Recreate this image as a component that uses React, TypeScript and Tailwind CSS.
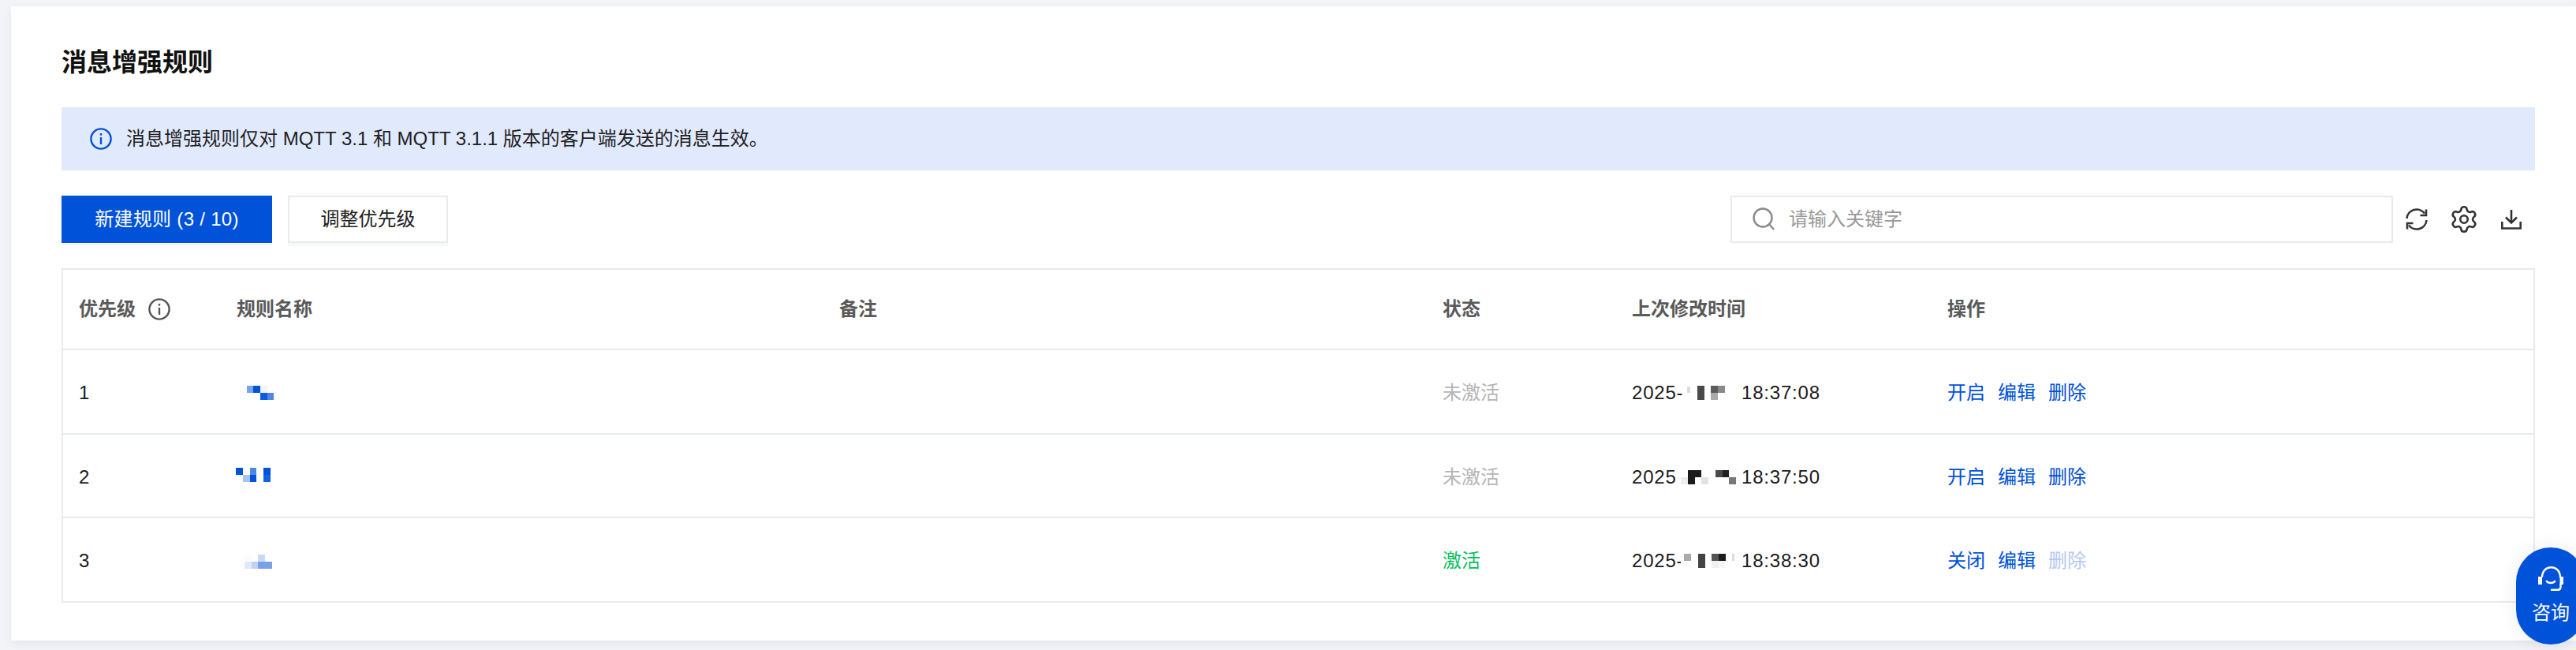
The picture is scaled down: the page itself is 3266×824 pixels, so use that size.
import { Settings } from 'lucide-react';

type Cell = [number, number, number, number, string];

const rows = [
  {
    no: '1',
    nameShift: 'mt-[3px]',
    name: [
      [14, 0, 8, 9, '#7aa3ea'],
      [22, 0, 9, 9, '#0052d9'],
      [31, 0, 9, 9, '#f0f4fe'],
      [31, 9, 9, 9, '#0f5ade'],
      [40, 9, 8, 9, '#4f87e6'],
    ] as Cell[],
    status: '未激活',
    statusClass: 'text-[#b5b5b5]',
    prefix: '2025-',
    date: [
      [8, 1, 4, 8, '#dddddd'],
      [21, 0, 9, 18, '#4a4a4a'],
      [38, 0, 9, 9, '#5c5c5c'],
      [47, 0, 9, 9, '#8a8a8a'],
      [38, 9, 9, 9, '#aaaaaa'],
    ] as Cell[],
    time: '18:37:08',
    toggle: '开启',
    deleteClass: 'text-[#0052d9]',
  },
  {
    no: '2',
    nameShift: 'mt-[-2px]',
    name: [
      [0, 0, 9, 9, '#0052d9'],
      [18, 0, 8, 9, '#4f87e6'],
      [35, 0, 9, 9, '#0052d9'],
      [9, 9, 9, 9, '#a9c3f1'],
      [18, 9, 8, 9, '#0052d9'],
      [35, 9, 9, 9, '#1560de'],
    ] as Cell[],
    status: '未激活',
    statusClass: 'text-[#b5b5b5]',
    prefix: '2025',
    date: [
      [0, 9, 9, 9, '#eeeeee'],
      [9, 0, 9, 18, '#1c1c1c'],
      [18, 0, 8, 9, '#1c1c1c'],
      [26, 9, 9, 9, '#e3e3e3'],
      [44, 0, 9, 9, '#4a4a4a'],
      [53, 0, 8, 9, '#222222'],
      [61, 9, 9, 9, '#777777'],
    ] as Cell[],
    time: '18:37:50',
    toggle: '开启',
    deleteClass: 'text-[#0052d9]',
  },
  {
    no: '3',
    nameShift: 'mt-[5px]',
    name: [
      [11, 0, 9, 9, '#fafbfe'],
      [28, 0, 9, 9, '#c9daf6'],
      [11, 9, 9, 9, '#e0e9fb'],
      [20, 9, 8, 9, '#bfd2f4'],
      [28, 9, 18, 9, '#78a1ea'],
    ] as Cell[],
    status: '激活',
    statusClass: 'text-[#0abf5b]',
    prefix: '2025-',
    date: [
      [0, 0, 4, 18, '#ffffff'],
      [4, 0, 9, 9, '#aaaaaa'],
      [22, 0, 9, 18, '#444444'],
      [39, 0, 9, 9, '#555555'],
      [48, 0, 9, 9, '#1c1c1c'],
      [39, 9, 9, 9, '#f0f0f0'],
      [48, 9, 9, 9, '#f7f7f7'],
      [65, 0, 3, 9, '#dddddd'],
    ] as Cell[],
    time: '18:38:30',
    toggle: '关闭',
    deleteClass: 'text-[#b5c9f3]',
  },
];

function Mosaic({ cells, width, className }: { cells: Cell[]; width: number; className?: string }) {
  return (
    <svg width={width} height={18} viewBox={`0 0 ${width} 18`} shapeRendering="crispEdges" className={className}>
      {cells.map(([x, y, w, h, fill], i) => (
        <rect key={i} x={x} y={y} width={w} height={h} fill={fill} />
      ))}
    </svg>
  );
}

function InfoIcon({ className }: { className: string }) {
  return (
    <svg viewBox="0 0 28 28" fill="none" stroke="currentColor" strokeWidth="2.4" className={className}>
      <circle cx="14" cy="14" r="12.6" />
      <path d="M14 12v9" />
      <path d="M14 7v2.6" />
    </svg>
  );
}

export default function App() {
  return (
    <div className="h-[824px] w-full overflow-hidden bg-[#f3f4f8] pt-[8px] pl-[14px] font-['Liberation_Sans','Noto_Sans_CJK_SC',sans-serif] text-[24px] text-[#1a1a1a] relative">
      <div className="h-[804px] bg-white pt-[51px] pl-[64px] pr-[52px] shadow-[0_4px_12px_rgba(54,58,80,0.08)]">
        <h1 className="h-[40px] mb-[37px] text-[32px] leading-[40px] font-semibold text-[#111111]">消息增强规则</h1>

        <div className="h-[80px] mb-[32px] flex items-center pl-[36px] bg-[#e1e9fd] text-[#1f1f1f]">
          <InfoIcon className="w-[28px] h-[28px] mr-[18px] text-[#0052d9]" />
          <span>消息增强规则仅对 MQTT 3.1 和 MQTT 3.1.1 版本的客户端发送的消息生效。</span>
        </div>

        <div className="h-[60px] mb-[32px] flex items-center justify-between">
          <div className="flex gap-[20px]">
            <button className="w-[267px] h-[60px] bg-[#0052d9] text-white tracking-[0.3px] shadow-[0_4px_0_#f7f8fa]">新建规则 (3 / 10)</button>
            <button className="w-[203px] h-[60px] border-2 border-[#e7eaef] text-[#222222] shadow-[0_4px_0_#f7f8fa]">调整优先级</button>
          </div>
          <div className="flex items-center pr-[17px] text-[#333333]">
            <div className="w-[840px] h-[60px] mr-[16px] flex items-center border-2 border-[#e7eaef] pl-[25px]">
              <svg viewBox="0 0 30 30" fill="none" stroke="#8a8a8a" strokeWidth="2.4" className="w-[30px] h-[30px] mr-[17px] shrink-0">
                <circle cx="14" cy="13" r="11.5" />
                <path d="M22 21l6 7" />
              </svg>
              <input placeholder="请输入关键字" className="flex-1 outline-none placeholder:text-[#999999]" />
            </div>
            <svg viewBox="0 0 28 28" fill="none" stroke="currentColor" strokeWidth="2.6" className="w-[28px] h-[28px] mr-[27px]">
              <path d="M1.5 13A12.5 12.5 0 0 1 24 6.5" />
              <path d="M26 1.5V9h-7.5" />
              <path d="M26.5 15A12.5 12.5 0 0 1 4 21.5" />
              <path d="M2 26.5V19h7.500" />
            </svg>
            <Settings size={38} strokeWidth={1.65} className="mr-[28px]" />
            <svg viewBox="0 0 26 26" fill="none" stroke="currentColor" strokeWidth="2.6" className="w-[26px] h-[26px]">
              <path d="M13 1v16" />
              <path d="M6 10.500l7 7 7-7" />
              <path d="M1.300 16v8.500h23.400V16" />
            </svg>
          </div>
        </div>

        <div className="border-2 border-[#e7eaef]">
          <div className="h-[102px] grid grid-cols-[200px_764px_765px_240px_400px_1fr] items-center border-b-2 border-[#e7eaef] font-semibold text-[#5a5a5a]">
            <div className="pl-[20px] flex items-center">
              优先级
              <InfoIcon className="w-[28px] h-[28px] ml-[16px] text-[#555555]" />
            </div>
            <div className="pl-[20px]">规则名称</div>
            <div className="pl-[20px]">备注</div>
            <div className="pl-[20px]">状态</div>
            <div className="pl-[20px]">上次修改时间</div>
            <div className="pl-[20px]">操作</div>
          </div>

          {rows.map((row, i) => (
            <div
              key={row.no}
              className={
                i === 0
                  ? 'h-[107px] grid grid-cols-[200px_764px_765px_240px_400px_1fr] items-center border-b-2 border-[#e7eaef]'
                  : i === 1
                    ? 'h-[106px] grid grid-cols-[200px_764px_765px_240px_400px_1fr] items-center border-b-2 border-[#e7eaef]'
                    : 'h-[105px] grid grid-cols-[200px_764px_765px_240px_400px_1fr] items-center'
              }
            >
              <div className="pl-[20px] mt-[3px]">{row.no}</div>
              <div className={`pl-[19px] ${row.nameShift}`}>
                <Mosaic cells={row.name} width={48} />
              </div>
              <div />
              <div className={`pl-[20px] mt-[3px] ${row.statusClass}`}>{row.status}</div>
              <div className="pl-[20px] mt-[3px] flex items-center tracking-[0.8px]">
                <span className="w-[62px] whitespace-nowrap">{row.prefix}</span>
                <Mosaic cells={row.date} width={77} />
                <span>{row.time}</span>
              </div>
              <div className="pl-[20px] mt-[3px] flex gap-[16px] text-[#0052d9]">
                <span>{row.toggle}</span>
                <span>编辑</span>
                <span className={row.deleteClass}>删除</span>
              </div>
            </div>
          ))}
        </div>
      </div>

      <div className="absolute left-[3190px] top-[694px] w-[88px] h-[123px] rounded-[44px] bg-[#0052d9] text-white flex flex-col items-center pt-[24px] shadow-[0_0_24px_rgba(0,0,0,0.08)]">
        <svg viewBox="0 0 32 31" className="w-[32px] h-[31px]" fill="none" stroke="currentColor" strokeWidth="2.4">
          <path d="M5 14C5 6 10 1.200 16.500 1.200S28 6 28 14" />
          <rect x="0" y="13" width="5" height="10" fill="currentColor" stroke="none" />
          <rect x="27.500" y="13" width="4.500" height="10" fill="currentColor" stroke="none" />
          <path d="M28.500 22v4c0 2.500-1.500 3.800-3.500 3.800h-9" />
          <path d="M10.500 18c1.500 4 9.500 4 11 0" />
        </svg>
        <span className="mt-[13px] leading-[30px]">咨询</span>
      </div>
    </div>
  );
}
